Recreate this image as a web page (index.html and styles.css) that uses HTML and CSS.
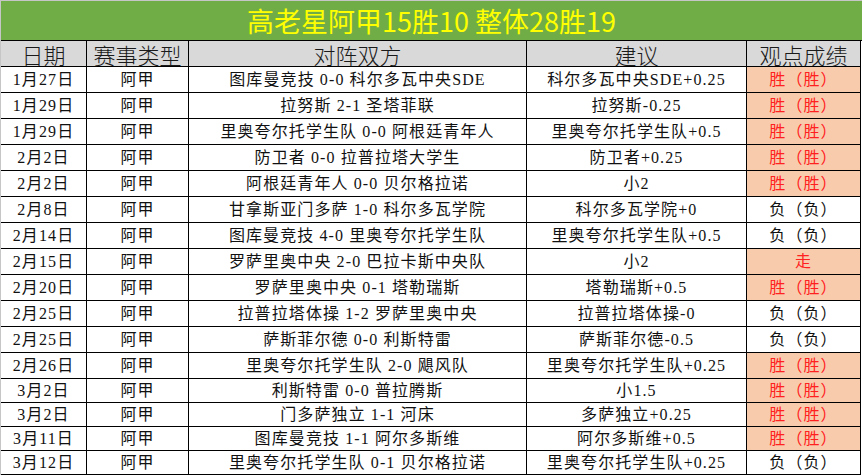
FILE: index.html
```html
<!DOCTYPE html>
<html lang="zh-CN">
<head>
<meta charset="utf-8">
<title>高老星阿甲</title>
<link rel="stylesheet" href="styles.css">
</head>
<body>
<div class="sheet">
  <div class="title">高老星阿甲15胜10 整体28胜19</div>
  <div class="grid">
    <div class="cell head">日期</div><div class="cell head">赛事类型</div><div class="cell head">对阵双方</div><div class="cell head">建议</div><div class="cell head">观点成绩</div>

    <div class="cell">1月27日</div><div class="cell">阿甲</div><div class="cell">图库曼竞技 0-0 科尔多瓦中央SDE</div><div class="cell">科尔多瓦中央SDE+0.25</div><div class="cell win">胜（胜）</div>
    <div class="cell">1月29日</div><div class="cell">阿甲</div><div class="cell">拉努斯 2-1 圣塔菲联</div><div class="cell">拉努斯-0.25</div><div class="cell win">胜（胜）</div>
    <div class="cell">1月29日</div><div class="cell">阿甲</div><div class="cell">里奥夸尔托学生队 0-0 阿根廷青年人</div><div class="cell">里奥夸尔托学生队+0.5</div><div class="cell win">胜（胜）</div>
    <div class="cell">2月2日</div><div class="cell">阿甲</div><div class="cell">防卫者 0-0 拉普拉塔大学生</div><div class="cell">防卫者+0.25</div><div class="cell win">胜（胜）</div>
    <div class="cell">2月2日</div><div class="cell">阿甲</div><div class="cell">阿根廷青年人 0-0 贝尔格拉诺</div><div class="cell">小2</div><div class="cell win">胜（胜）</div>
    <div class="cell">2月8日</div><div class="cell">阿甲</div><div class="cell">甘拿斯亚门多萨 1-0 科尔多瓦学院</div><div class="cell">科尔多瓦学院+0</div><div class="cell">负（负）</div>
    <div class="cell">2月14日</div><div class="cell">阿甲</div><div class="cell">图库曼竞技 4-0 里奥夸尔托学生队</div><div class="cell">里奥夸尔托学生队+0.5</div><div class="cell">负（负）</div>
    <div class="cell">2月15日</div><div class="cell">阿甲</div><div class="cell">罗萨里奥中央 2-0 巴拉卡斯中央队</div><div class="cell">小2</div><div class="cell win">走</div>
    <div class="cell">2月20日</div><div class="cell">阿甲</div><div class="cell">罗萨里奥中央 0-1 塔勒瑞斯</div><div class="cell">塔勒瑞斯+0.5</div><div class="cell win">胜（胜）</div>
    <div class="cell">2月25日</div><div class="cell">阿甲</div><div class="cell">拉普拉塔体操 1-2 罗萨里奥中央</div><div class="cell">拉普拉塔体操-0</div><div class="cell">负（负）</div>
    <div class="cell">2月25日</div><div class="cell">阿甲</div><div class="cell">萨斯菲尔德 0-0 利斯特雷</div><div class="cell">萨斯菲尔德-0.5</div><div class="cell">负（负）</div>
    <div class="cell">2月26日</div><div class="cell">阿甲</div><div class="cell">里奥夸尔托学生队 2-0 飓风队</div><div class="cell">里奥夸尔托学生队+0.25</div><div class="cell win">胜（胜）</div>
    <div class="cell">3月2日</div><div class="cell">阿甲</div><div class="cell">利斯特雷 0-0 普拉腾斯</div><div class="cell">小1.5</div><div class="cell win">胜（胜）</div>
    <div class="cell">3月2日</div><div class="cell">阿甲</div><div class="cell">门多萨独立 1-1 河床</div><div class="cell">多萨独立+0.25</div><div class="cell win">胜（胜）</div>
    <div class="cell">3月11日</div><div class="cell">阿甲</div><div class="cell">图库曼竞技 1-1 阿尔多斯维</div><div class="cell">阿尔多斯维+0.5</div><div class="cell win">胜（胜）</div>
    <div class="cell">3月12日</div><div class="cell">阿甲</div><div class="cell">里奥夸尔托学生队 0-1 贝尔格拉诺</div><div class="cell">里奥夸尔托学生队+0.25</div><div class="cell">负（负）</div>
  </div>
</div>
</body>
</html>
```
FILE: styles.css
```css
html, body {
  margin: 0;
  padding: 0;
  background: #ffffff;
}

.sheet {
  width: 861px;
  border-top: 1px solid #c6c6c6;
  border-left: 1px solid #c6c6c6;
}

.title {
  height: 39px;
  background: #70ad47;
  border-bottom: 1px solid #000000;
  color: #ffff00;
  font-family: "Noto Sans CJK SC", sans-serif;
  font-size: 27px;
  line-height: 39px;
  text-align: center;
  white-space: pre;
}

.grid {
  display: grid;
  width: max-content;
  grid-template-columns: 85px 101px 337px 219px 113px;
  grid-template-rows: 25px repeat(12, 25px) repeat(4, 23px);
  gap: 1px;
  padding: 0 1px 1px 0;
  background: #000000;
}

.cell {
  background: #ffffff;
  display: flex;
  align-items: center;
  justify-content: center;
  white-space: nowrap;
  color: #111111;
  font-family: "Liberation Serif", "Noto Sans CJK SC", serif;
  font-size: 16px;
  letter-spacing: 1.1px;
  line-height: 18px;
}

.head {
  background: #d9d9d9;
  font-family: "Noto Sans CJK SC", sans-serif;
  font-size: 22px;
  font-weight: 300;
  letter-spacing: 0;
  line-height: 24px;
  color: #1a1a1a;
}

.win {
  background: #f8cbad;
  color: #ff2020;
}
```
